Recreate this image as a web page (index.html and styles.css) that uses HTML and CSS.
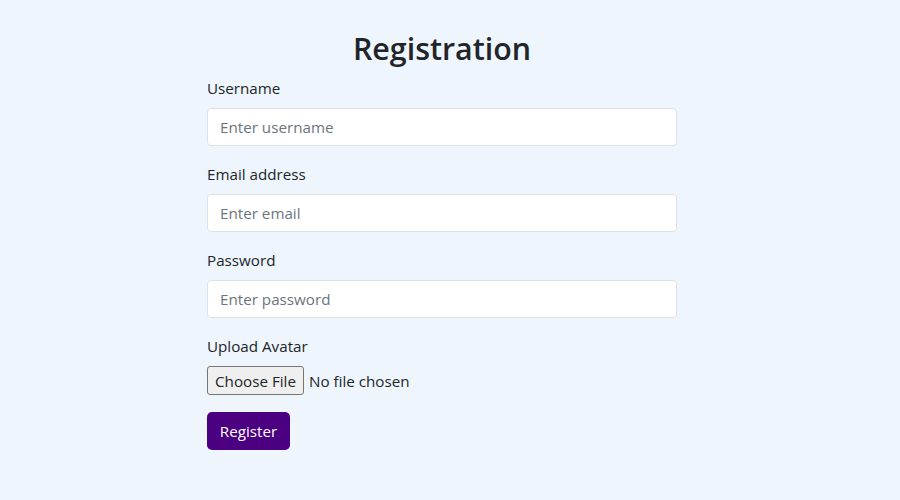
FILE: index.html
```html
<!DOCTYPE html>
<html lang="en">
<head>
<meta charset="utf-8">
<title>Registration</title>
<link rel="stylesheet" href="styles.css">
</head>
<body>
<div class="page">
  <form class="form">
    <h2 class="title">Registration</h2>
    <div class="group">
      <label class="label" for="u">Username</label>
      <input class="control" id="u" type="text" placeholder="Enter username">
    </div>
    <div class="group">
      <label class="label" for="e">Email address</label>
      <input class="control" id="e" type="email" placeholder="Enter email">
    </div>
    <div class="group">
      <label class="label" for="p">Password</label>
      <input class="control" id="p" type="password" placeholder="Enter password">
    </div>
    <div class="group group-file">
      <label class="label" for="a">Upload Avatar</label>
      <div class="file">
        <span class="file-btn">Choose File</span>
        <span class="file-text">No file chosen</span>
      </div>
    </div>
    <button class="btn" type="button">Register</button>
  </form>
</div>
</body>
</html>
```
FILE: styles.css
```css
html, body {
  margin: 0;
  height: 100%;
}
body {
  background: #eef5fd;
  color: #212529;
  font-family: "Open Sans", "Noto Sans", sans-serif;
  font-size: 15.2px;
  line-height: 24px;
}
.page {
  padding: 30px 0 0 207px;
}
.form {
  width: 470px;
  margin: 0;
}
.title {
  margin: 0 0 8px;
  text-align: center;
  font-size: 30.4px;
  font-weight: 600;
  line-height: 38px;
}
.group {
  margin-bottom: 16px;
}
.group-file {
  margin-bottom: 17px;
}
.label {
  display: block;
  margin-bottom: 8px;
  line-height: 24px;
}
.control {
  display: block;
  box-sizing: border-box;
  width: 100%;
  height: 38px;
  padding: 6px 12px;
  border: 1px solid #dee2e6;
  border-radius: 4px;
  background: #fff;
  font: inherit;
  color: #212529;
  outline: none;
}
.control::placeholder {
  color: #6c757d;
  opacity: 1;
}
.file {
  display: flex;
  align-items: center;
  gap: 5px;
  height: 29px;
}
.file-btn {
  box-sizing: border-box;
  height: 29px;
  width: 97px;
  display: flex;
  align-items: center;
  justify-content: center;
  background: #efefef;
  border: 1px solid #767676;
  border-radius: 3px;
  color: #212529;
}
.file-text {
  color: #212529;
}
.btn {
  display: block;
  box-sizing: border-box;
  width: 83px;
  height: 38px;
  padding: 0;
  border: 0;
  border-radius: 5px;
  background: #4b0082;
  color: #fff;
  font: inherit;
  cursor: pointer;
}
```
